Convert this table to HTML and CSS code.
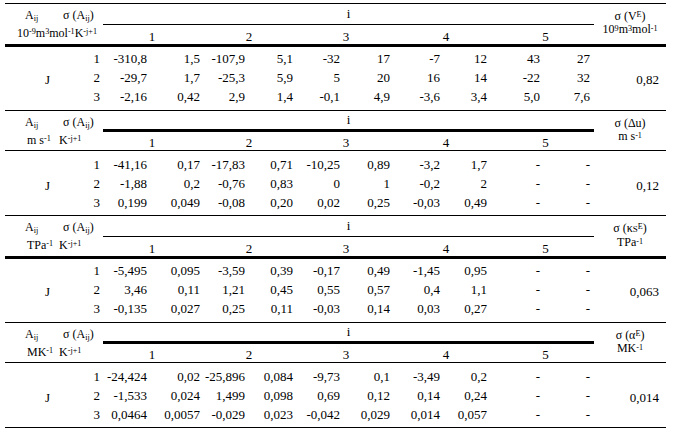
FILE: index.html
```html
<!DOCTYPE html>
<html lang="en">
<head>
<meta charset="utf-8">
<title>Coefficients</title>
<link rel="stylesheet" href="styles.css">
</head>
<body>
<div class="page">

<table class="sec thin-sub">
  <colgroup>
    <col class="w0"><col class="w1"><col class="w2"><col class="w3"><col class="w4"><col class="w5"><col class="w6"><col class="w7"><col class="w8"><col class="w9"><col class="w10"><col class="w11"><col class="w12">
  </colgroup>
  <tr class="h1">
    <th colspan="2" class="lh"><span class="a">A<sub>ij</sub></span><span>σ (A<sub>ij</sub>)</span></th>
    <th colspan="10" class="i">i</th>
    <th rowspan="2" class="rh"><span class="l1">σ (V<sup>E</sup>)</span><span class="l2">10<sup>9</sup>m<sup>3</sup>mol<sup>-1</sup></span></th>
  </tr>
  <tr class="h2">
    <th colspan="2" class="units u1">10<sup>-9</sup>m<sup>3</sup>mol<sup>-1</sup>K<sup>-j+1</sup></th>
    <th colspan="2" class="num">1</th><th colspan="2" class="num">2</th><th colspan="2" class="num">3</th><th colspan="2" class="num">4</th><th colspan="2" class="num">5</th>
  </tr>
  <tr class="r1">
    <td rowspan="3" class="J">J</td><td class="j">1</td>
    <td>-310,8</td><td class="c3">1,5</td><td>-107,9</td><td>5,1</td><td>-32</td><td class="c7">17</td><td>-7</td><td class="c9">12</td><td>43</td><td>27</td>
    <td rowspan="3" class="sig">0,82</td>
  </tr>
  <tr class="r2">
    <td class="j">2</td>
    <td>-29,7</td><td class="c3">1,7</td><td>-25,3</td><td>5,9</td><td>5</td><td class="c7">20</td><td>16</td><td class="c9">14</td><td>-22</td><td>32</td>
  </tr>
  <tr class="r3">
    <td class="j">3</td>
    <td>-2,16</td><td class="c3">0,42</td><td>2,9</td><td>1,4</td><td>-0,1</td><td class="c7">4,9</td><td>-3,6</td><td class="c9">3,4</td><td>5,0</td><td>7,6</td>
  </tr>
</table>

<table class="sec thick-sub">
  <colgroup>
    <col class="w0"><col class="w1"><col class="w2"><col class="w3"><col class="w4"><col class="w5"><col class="w6"><col class="w7"><col class="w8"><col class="w9"><col class="w10"><col class="w11"><col class="w12">
  </colgroup>
  <tr class="h1">
    <th colspan="2" class="lh"><span class="a">A<sub>ij</sub></span><span>σ (A<sub>ij</sub>)</span></th>
    <th colspan="10" class="i">i</th>
    <th rowspan="2" class="rh"><span class="l1">σ (Δu)</span><span class="l2">m s<sup>-1</sup></span></th>
  </tr>
  <tr class="h2">
    <th colspan="2" class="units"><span class="u">m s<sup>-1</sup></span>K<sup>-j+1</sup></th>
    <th colspan="2" class="num">1</th><th colspan="2" class="num">2</th><th colspan="2" class="num">3</th><th colspan="2" class="num">4</th><th colspan="2" class="num">5</th>
  </tr>
  <tr class="r1">
    <td rowspan="3" class="J">J</td><td class="j">1</td>
    <td>-41,16</td><td class="c3">0,17</td><td>-17,83</td><td>0,71</td><td>-10,25</td><td class="c7">0,89</td><td>-3,2</td><td class="c9">1,7</td><td>-</td><td>-</td>
    <td rowspan="3" class="sig">0,12</td>
  </tr>
  <tr class="r2">
    <td class="j">2</td>
    <td>-1,88</td><td class="c3">0,2</td><td>-0,76</td><td>0,83</td><td>0</td><td class="c7">1</td><td>-0,2</td><td class="c9">2</td><td>-</td><td>-</td>
  </tr>
  <tr class="r3">
    <td class="j">3</td>
    <td>0,199</td><td class="c3">0,049</td><td>-0,08</td><td>0,20</td><td>0,02</td><td class="c7">0,25</td><td>-0,03</td><td class="c9">0,49</td><td>-</td><td>-</td>
  </tr>
</table>

<table class="sec thin-sub">
  <colgroup>
    <col class="w0"><col class="w1"><col class="w2"><col class="w3"><col class="w4"><col class="w5"><col class="w6"><col class="w7"><col class="w8"><col class="w9"><col class="w10"><col class="w11"><col class="w12">
  </colgroup>
  <tr class="h1">
    <th colspan="2" class="lh"><span class="a">A<sub>ij</sub></span><span>σ (A<sub>ij</sub>)</span></th>
    <th colspan="10" class="i">i</th>
    <th rowspan="2" class="rh"><span class="l1">σ (κ<span class="sm">S</span><sup>E</sup>)</span><span class="l2">TPa<sup>-1</sup></span></th>
  </tr>
  <tr class="h2">
    <th colspan="2" class="units"><span class="u">TPa<sup>-1</sup></span>K<sup>-j+1</sup></th>
    <th colspan="2" class="num">1</th><th colspan="2" class="num">2</th><th colspan="2" class="num">3</th><th colspan="2" class="num">4</th><th colspan="2" class="num">5</th>
  </tr>
  <tr class="r1">
    <td rowspan="3" class="J">J</td><td class="j">1</td>
    <td>-5,495</td><td class="c3">0,095</td><td>-3,59</td><td>0,39</td><td>-0,17</td><td class="c7">0,49</td><td>-1,45</td><td class="c9">0,95</td><td>-</td><td>-</td>
    <td rowspan="3" class="sig">0,063</td>
  </tr>
  <tr class="r2">
    <td class="j">2</td>
    <td>3,46</td><td class="c3">0,11</td><td>1,21</td><td>0,45</td><td>0,55</td><td class="c7">0,57</td><td>0,4</td><td class="c9">1,1</td><td>-</td><td>-</td>
  </tr>
  <tr class="r3">
    <td class="j">3</td>
    <td>-0,135</td><td class="c3">0,027</td><td>0,25</td><td>0,11</td><td>-0,03</td><td class="c7">0,14</td><td>0,03</td><td class="c9">0,27</td><td>-</td><td>-</td>
  </tr>
</table>

<table class="sec thick-sub last">
  <colgroup>
    <col class="w0"><col class="w1"><col class="w2"><col class="w3"><col class="w4"><col class="w5"><col class="w6"><col class="w7"><col class="w8"><col class="w9"><col class="w10"><col class="w11"><col class="w12">
  </colgroup>
  <tr class="h1">
    <th colspan="2" class="lh"><span class="a">A<sub>ij</sub></span><span>σ (A<sub>ij</sub>)</span></th>
    <th colspan="10" class="i">i</th>
    <th rowspan="2" class="rh"><span class="l1">σ (α<sup>E</sup>)</span><span class="l2">MK<sup>-1</sup></span></th>
  </tr>
  <tr class="h2">
    <th colspan="2" class="units"><span class="u">MK<sup>-1</sup></span>K<sup>-j+1</sup></th>
    <th colspan="2" class="num">1</th><th colspan="2" class="num">2</th><th colspan="2" class="num">3</th><th colspan="2" class="num">4</th><th colspan="2" class="num">5</th>
  </tr>
  <tr class="r1">
    <td rowspan="3" class="J">J</td><td class="j">1</td>
    <td>-24,424</td><td class="c3">0,02</td><td>-25,896</td><td>0,084</td><td>-9,73</td><td class="c7">0,1</td><td>-3,49</td><td class="c9">0,2</td><td>-</td><td>-</td>
    <td rowspan="3" class="sig">0,014</td>
  </tr>
  <tr class="r2">
    <td class="j">2</td>
    <td>-1,533</td><td class="c3">0,024</td><td>1,499</td><td>0,098</td><td>0,69</td><td class="c7">0,12</td><td>0,14</td><td class="c9">0,24</td><td>-</td><td>-</td>
  </tr>
  <tr class="r3">
    <td class="j">3</td>
    <td>0,0464</td><td class="c3">0,0057</td><td>-0,029</td><td>0,023</td><td>-0,042</td><td class="c7">0,029</td><td>0,014</td><td class="c9">0,057</td><td>-</td><td>-</td>
  </tr>
</table>

</div>
</body>
</html>
```

FILE: styles.css
```css
html, body {
  margin: 0;
  padding: 0;
  background: #ffffff;
}

body {
  font-family: "Liberation Serif", "Times New Roman", serif;
  color: #000000;
}

.page {
  padding: 3px 0 0 5px;
}

.sec {
  width: 661px;
  table-layout: fixed;
  border-collapse: separate;
  border-spacing: 0;
  border-top: 1px solid #000;
}

.sec.last {
  border-bottom: 1px solid #000;
}

.w0 { width: 85px; }
.w1 { width: 13px; }
.w2 { width: 48px; }
.w3 { width: 50px; }
.w4 { width: 48px; }
.w5 { width: 48px; }
.w6 { width: 47px; }
.w7 { width: 51px; }
.w8 { width: 49px; }
.w9 { width: 53px; }
.w10 { width: 47px; }
.w11 { width: 50px; }
.w12 { width: 72px; }

th, td {
  padding: 0;
  font-weight: normal;
  white-space: nowrap;
}

sup, sub {
  font-size: 0.68em;
  line-height: 0;
}

sup { vertical-align: 0.4em; }
sub { vertical-align: -0.22em; }

.sm { font-size: 0.75em; }

/* header row 1 */
.h1 { height: 21px; }

.lh {
  font-size: 12px;
  text-align: left;
  vertical-align: middle;
  padding-left: 20px;
  padding-top: 1px;
}

.lh .a {
  display: inline-block;
  width: 38px;
}

.i {
  font-size: 13px;
  vertical-align: middle;
  text-align: center;
}

.thin-sub .i { border-bottom: 1px solid #000; }
.thick-sub .i { border-bottom: 3px solid #000; }

.rh {
  font-size: 12px;
  text-align: center;
  vertical-align: top;
  padding-top: 6px;
}

.rh .l1,
.rh .l2 {
  display: block;
  line-height: 13px;
}

.rh .l2 sup { vertical-align: 0.3em; }

/* header row 2 */
.thin-sub .h2 { height: 22px; }
.thick-sub .h2 { height: 19px; }

.h2 th, .rh {
  border-bottom-style: solid;
  border-bottom-color: #000;
}

.thin-sub .h2 th, .thin-sub .rh { border-bottom-width: 3px; }
.thick-sub .h2 th, .thick-sub .rh { border-bottom-width: 1px; }

.units {
  font-size: 12px;
  line-height: 12px;
  text-align: left;
  vertical-align: top;
  padding-top: 2px;
  padding-left: 22px;
}

.units.u1 { padding-left: 12px; }

.units .u {
  display: inline-block;
  width: 32px;
}

.num {
  font-size: 13px;
  line-height: 12px;
  text-align: center;
  vertical-align: bottom;
  padding-bottom: 1px;
}

/* data rows */
td {
  font-size: 13px;
  line-height: 19px;
  height: 19px;
  text-align: right;
  padding-right: 4px;
  vertical-align: middle;
}

.thin-sub .r1 td { padding-top: 2px; }
.thin-sub .r3 td { padding-bottom: 4px; }
.thick-sub .r1 td { padding-top: 4px; }
.thick-sub .r3 td { padding-bottom: 3px; }

td.J {
  text-align: center;
  padding-right: 0;
}

td.j { padding-right: 3px; }
td.c3 { padding-right: 1px; }
td.c7 { padding-right: 5px; }
td.c9 { padding-right: 10px; }
td.sig { padding-right: 7px; }
```
